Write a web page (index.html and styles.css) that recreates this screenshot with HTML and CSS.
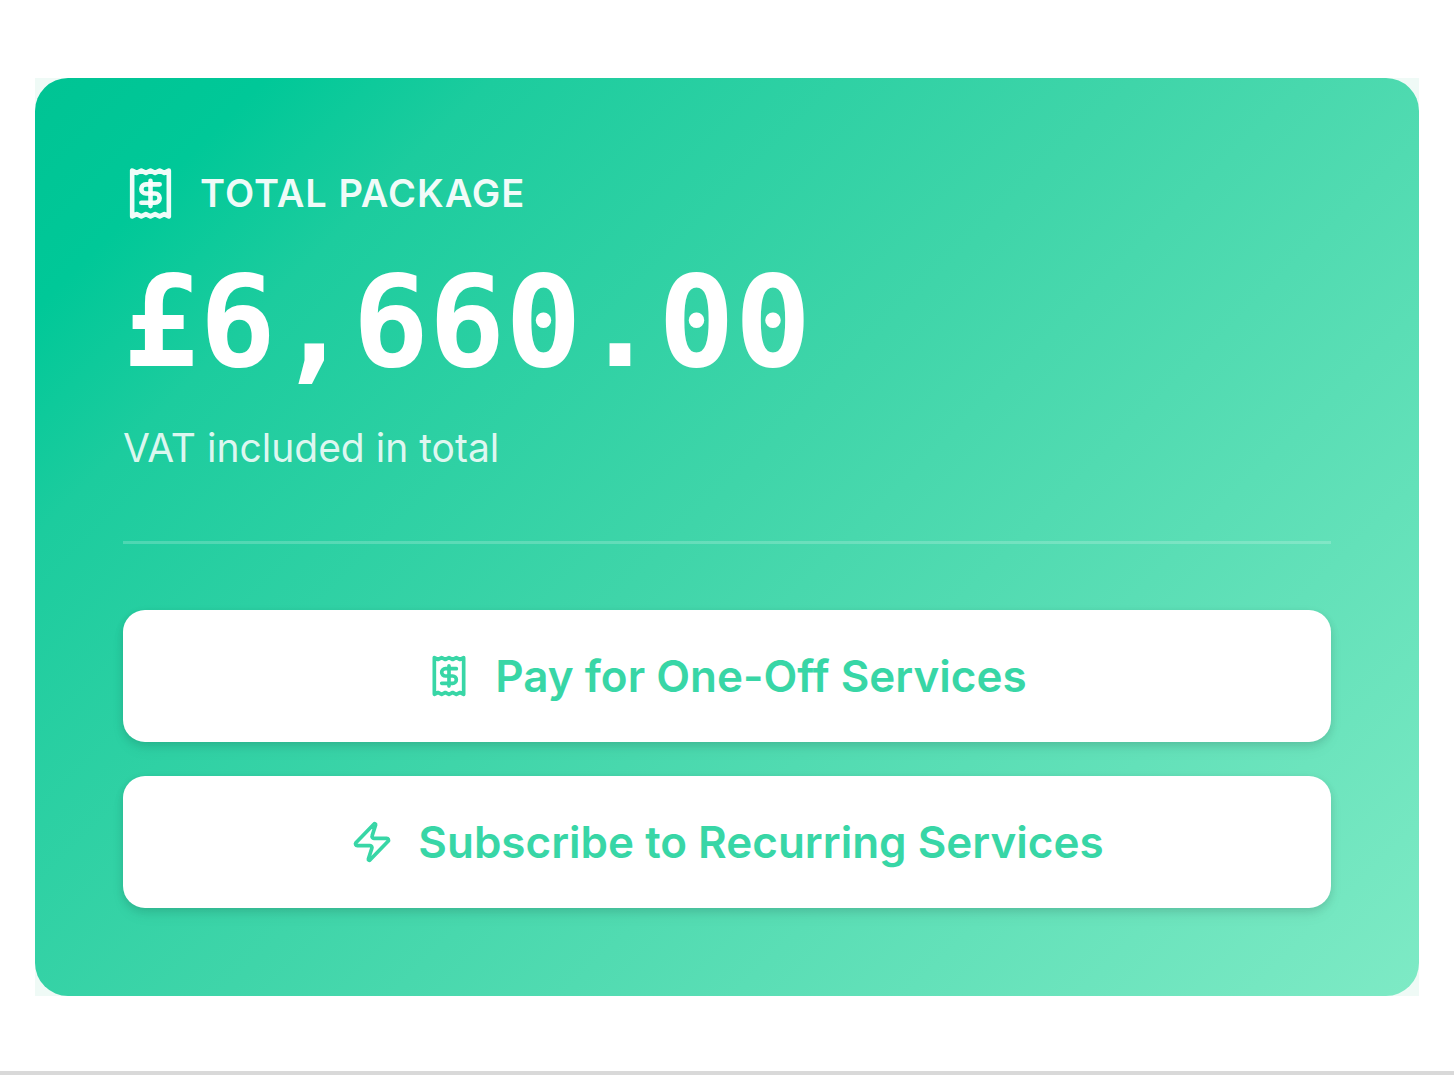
FILE: index.html
```html
<!DOCTYPE html>
<html lang="en">
<head>
<meta charset="utf-8">
<meta name="viewport" content="width=device-width, initial-scale=1">
<title>Total Package</title>
<link rel="stylesheet" href="styles.css">
</head>
<body>
<svg class="sprite" aria-hidden="true">
  <symbol id="receipt" viewBox="0 0 24 24">
    <path d="M4 2v20l2-1 2 1 2-1 2 1 2-1 2 1 2-1 2 1V2l-2 1-2-1-2 1-2-1-2 1-2-1-2 1Z"/>
    <path d="M16 8h-6a2 2 0 1 0 0 4h4a2 2 0 1 1 0 4H8"/>
    <path d="M12 17.5v-11"/>
  </symbol>
  <symbol id="zap" viewBox="0 0 24 24">
    <path d="M4 14a1 1 0 0 1-.78-1.63l9.9-10.2a.5.5 0 0 1 .86.46l-1.92 6.02A1 1 0 0 0 13 10h7a1 1 0 0 1 .78 1.63l-9.9 10.2a.5.5 0 0 1-.86-.46l1.92-6.02A1 1 0 0 0 11 14z"/>
  </symbol>
</svg>
<main class="page">
  <div class="backdrop">
    <section class="card">
      <header class="card-header">
        <svg class="icon icon-large" aria-hidden="true"><use href="#receipt"/></svg>
        <h1 class="title">TOTAL PACKAGE</h1>
      </header>
      <p class="amount">£6,660.00</p>
      <p class="note">VAT included in total</p>
      <div class="actions">
        <button class="action" type="button">
          <svg class="icon" aria-hidden="true"><use href="#receipt"/></svg>
          <span>Pay for One-Off Services</span>
        </button>
        <button class="action" type="button">
          <svg class="icon" aria-hidden="true"><use href="#zap"/></svg>
          <span>Subscribe to Recurring Services</span>
        </button>
      </div>
    </section>
  </div>
</main>
</body>
</html>
```
FILE: styles.css
```css
* {
  box-sizing: border-box;
}

body {
  margin: 0;
  background: #fff;
  font-family: Inter, "Liberation Sans", sans-serif;
}

.sprite {
  display: none;
}

.page {
  min-height: 100vh;
  padding: 78px 35px 75px;
  border-bottom: 4px solid #d9d9d9;
}

.backdrop {
  background: #effaf6;
}

.card {
  padding: 88px;
  border-radius: 33px;
  background: linear-gradient(135deg, #00c494 0%, #00c898 10%, #1ccc9e 20%, #3fd5a9 48%, #7eeac5 100%);
  color: #fff;
}

.card-header {
  display: flex;
  align-items: center;
  gap: 22px;
  color: rgba(255, 255, 255, 0.94);
}

.icon {
  flex: none;
  width: 44px;
  height: 44px;
  fill: none;
  stroke: currentColor;
  stroke-width: 2;
  stroke-linecap: round;
  stroke-linejoin: round;
}

.icon-large {
  width: 55px;
  height: 55px;
}

.title {
  margin: 0;
  font-size: 38px;
  font-weight: 600;
  line-height: 55px;
  letter-spacing: 1px;
}

.amount {
  margin: 35px 0 32px;
  font-family: "DejaVu Sans Mono", monospace;
  font-size: 127px;
  font-weight: 700;
  line-height: 132px;
}

.note {
  margin: 0;
  color: rgba(255, 255, 255, 0.86);
  font-size: 39px;
  line-height: 55px;
}

.actions {
  display: flex;
  flex-direction: column;
  gap: 34px;
  margin-top: 66px;
  padding-top: 66px;
  border-top: 3px solid rgba(255, 255, 255, 0.2);
}

.action {
  display: flex;
  align-items: center;
  justify-content: center;
  gap: 24px;
  width: 100%;
  min-height: 132px;
  padding: 0 44px;
  border: 0;
  border-radius: 22px;
  background: #fff;
  box-shadow: 0 3px 8px rgba(0, 0, 0, 0.12), 0 8px 16px rgba(0, 0, 0, 0.04);
  color: #38d6a6;
  font: 600 44px/66px Inter, "Liberation Sans", sans-serif;
}
```
